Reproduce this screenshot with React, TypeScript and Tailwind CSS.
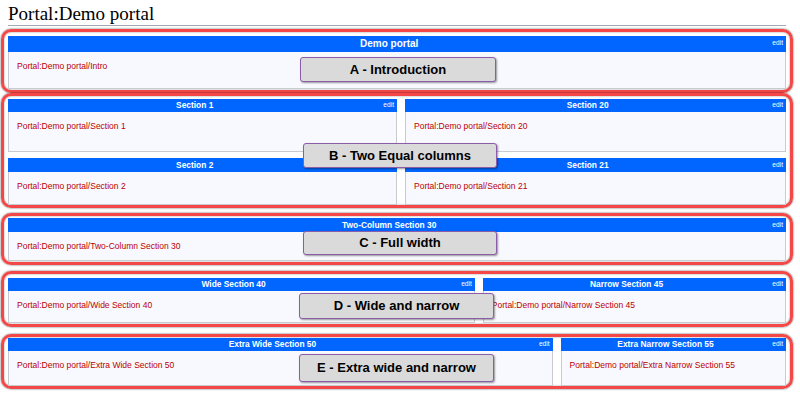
import React from "react";

type SectionProps = {
  title: string;
  link: string;
  head: string;
  body: string;
  big?: boolean;
};

const Section = ({ title, link, head, body, big }: SectionProps) => (
  <div>
    {/* blue title bar */}
    <div className={`flex items-center bg-[#0066ff] text-white ${head}`}>
      <span className={`flex-1 text-center font-bold leading-none ${big ? "text-[10px]" : "text-[8.4px]"}`}>
        {title}
      </span>
      <span className={`pl-[2px] pr-[3px] text-[6.6px] leading-none ${big ? "self-start pt-[4px]" : ""}`}>edit</span>
    </div>
    {/* body */}
    <div
      className={`border-x border-b border-[#c8ccd1] bg-[#f8f8ff] pl-[8px] pt-[9px] text-[8.5px] leading-[10px] text-[#ba0000] ${body}`}
    >
      {link}
    </div>
  </div>
);

const RedBox = ({ className, children }: { className: string; children: React.ReactNode }) => (
  <div
    className={`-mx-[7px] rounded-[10px] border-[3px] border-[#f44848] px-[4px] shadow-[0_0_2px_rgba(0,0,0,0.7),inset_0_0_2px_rgba(0,0,0,0.45)] ${className}`}
  >
    {children}
  </div>
);

const Label = ({ text, className }: { text: string; className: string }) => (
  <div
    className={`absolute flex items-center justify-center rounded-[3px] border-[1.5px] border-[#8b5ca8] bg-[#dadada] text-[13px] font-bold text-black shadow-[1px_1px_2px_rgba(0,0,0,0.4)] ${className}`}
  >
    {text}
  </div>
);

export default function App() {
  return (
    <div className="relative h-[395px] w-[800px] overflow-hidden bg-white font-['Liberation_Sans',Arial,sans-serif]">
      <div className="ml-[8px] w-[778px]">
        <h1 className="border-b border-[#a2a9b1] pt-[3px] font-['Liberation_Serif',serif] text-[19px] leading-[22px] text-black">
          Portal:Demo portal
        </h1>

        {/* A */}
        <RedBox className="mt-[3px] pt-[4px] pb-[1px]">
          <Section title="Demo portal" link="Portal:Demo portal/Intro" head="h-[16px]" body="h-[37px]" big />
        </RedBox>

        {/* B */}
        <RedBox className="pt-[3px]">
          <div className="flex gap-[8px]">
            <div className="w-1/2">
              <Section title="Section 1" link="Portal:Demo portal/Section 1" head="h-[13px]" body="h-[40px]" />
              <div className="mt-[6px]">
                <Section title="Section 2" link="Portal:Demo portal/Section 2" head="h-[14px]" body="h-[33px]" />
              </div>
            </div>
            <div className="flex-1">
              <Section title="Section 20" link="Portal:Demo portal/Section 20" head="h-[13px]" body="h-[40px]" />
              <div className="mt-[6px]">
                <Section title="Section 21" link="Portal:Demo portal/Section 21" head="h-[14px]" body="h-[33px]" />
              </div>
            </div>
          </div>
        </RedBox>

        {/* C */}
        <RedBox className="mt-[5px] pt-[2px] pb-[1px]">
          <Section
            title="Two-Column Section 30"
            link="Portal:Demo portal/Two-Column Section 30"
            head="h-[14px]"
            body="h-[29px]"
          />
        </RedBox>

        {/* D */}
        <RedBox className="mt-[6px] pt-[4px] pb-[1px]">
          <div className="flex gap-[8px]">
            <div className="w-[60%]">
              <Section title="Wide Section 40" link="Portal:Demo portal/Wide Section 40" head="h-[13px]" body="h-[32px]" />
            </div>
            <div className="flex-1">
              <Section title="Narrow Section 45" link="Portal:Demo portal/Narrow Section 45" head="h-[13px]" body="h-[32px]" />
            </div>
          </div>
        </RedBox>

        {/* E */}
        <RedBox className="mt-[7px] pt-[1px]">
          <div className="flex gap-[8px]">
            <div className="w-[70%]">
              <Section
                title="Extra Wide Section 50"
                link="Portal:Demo portal/Extra Wide Section 50"
                head="h-[13px]"
                body="h-[35px]"
              />
            </div>
            <div className="flex-1">
              <Section
                title="Extra Narrow Section 55"
                link="Portal:Demo portal/Extra Narrow Section 55"
                head="h-[13px]"
                body="h-[35px]"
              />
            </div>
          </div>
        </RedBox>
      </div>

      {/* annotation labels */}
      <Label text="A - Introduction" className="left-[300px] top-[57px] h-[25px] w-[196px]" />
      <Label text="B - Two Equal columns" className="left-[303px] top-[143px] h-[25px] w-[194px]" />
      <Label text="C - Full width" className="left-[303px] top-[231px] h-[24px] w-[194px]" />
      <Label text="D - Wide and narrow" className="left-[299px] top-[293px] h-[26px] w-[195px]" />
      <Label text="E - Extra wide and narrow" className="left-[299px] top-[354px] h-[28px] w-[195px]" />
    </div>
  );
}
